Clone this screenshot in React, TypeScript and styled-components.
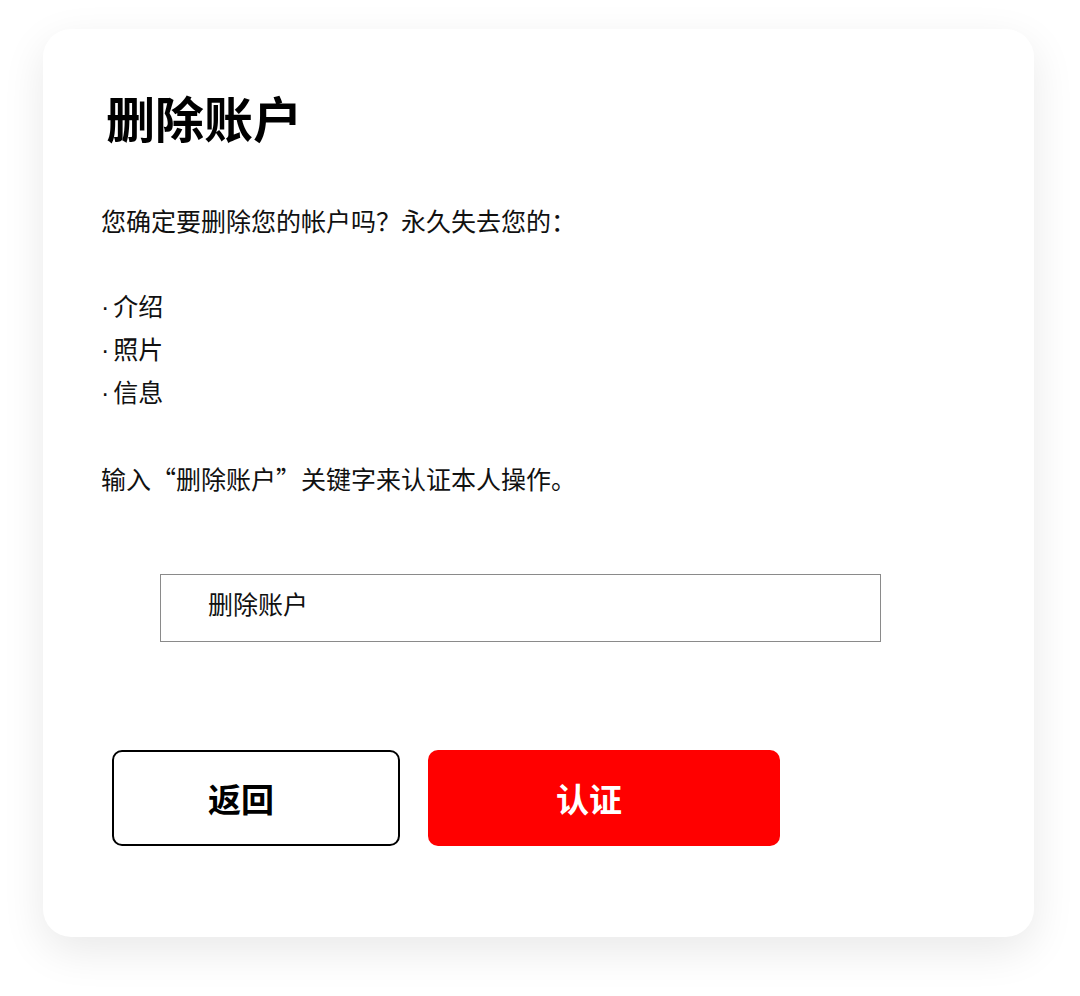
import styled, { createGlobalStyle } from "styled-components";

const GlobalStyle = createGlobalStyle`
  html, body {
    margin: 0;
    padding: 0;
    background: #ffffff;
  }
  body {
    font-family: "Noto Sans CJK SC", "Noto Sans", sans-serif;
    color: #111;
  }
`;

const Page = styled.div`
  width: 1080px;
  height: 996px;
  padding: 29px 0 0 43px;
  box-sizing: border-box;
  overflow: hidden;
`;

const Card = styled.div`
  width: 991px;
  height: 908px;
  box-sizing: border-box;
  background: #fff;
  border-radius: 28px;
  box-shadow: 0 14px 44px rgba(0, 0, 0, 0.09);
  padding: 63px 0 0 58px;
  display: flex;
  flex-direction: column;
  align-items: flex-start;
`;

const Title = styled.h1`
  margin: 0 0 0 5px;
  font-size: 49px;
  line-height: 49px;
  font-weight: 700;
  color: #000;
`;

const Text = styled.p<{ $top: number }>`
  margin: ${(p) => p.$top}px 0 0;
  font-size: 25px;
  line-height: 25px;
  color: #111;
`;

const List = styled.ul`
  margin: 51px 0 0;
  padding: 0;
  list-style: none;
`;

const Item = styled.li`
  font-size: 25px;
  line-height: 43px;
  color: #111;
  &::before {
    content: "·";
    font-family: "Liberation Sans", sans-serif;
    line-height: 0;
    margin-right: 4px;
  }
`;

const Field = styled.input`
  margin: 83px 0 0 59px;
  width: 721px;
  height: 68px;
  box-sizing: border-box;
  border: 1.5px solid #8a8a8a;
  padding: 0 0 10px 47px;
  font-family: inherit;
  font-size: 25px;
  color: #111;
  outline: none;
  background: #fff;
`;

const Actions = styled.div`
  margin: 108px 0 0 11px;
  display: flex;
  gap: 28px;
`;

const Button = styled.button<{ $primary?: boolean }>`
  height: 96px;
  width: ${(p) => (p.$primary ? 352 : 288)}px;
  box-sizing: border-box;
  border-radius: 10px;
  border: ${(p) => (p.$primary ? "none" : "2px solid #000")};
  background: ${(p) => (p.$primary ? "#ff0000" : "#fff")};
  color: ${(p) => (p.$primary ? "#fff" : "#000")};
  font-family: inherit;
  font-size: 33px;
  font-weight: 700;
  padding: 0 30px 0 0;
  cursor: pointer;
`;

export default function App() {
  return (
    <Page>
      <GlobalStyle />
      <Card>
        <Title>删除账户</Title>
        <Text $top={67}>您确定要删除您的帐户吗？永久失去您的：</Text>
        <List>
          <Item>介绍</Item>
          <Item>照片</Item>
          <Item>信息</Item>
        </List>
        <Text $top={53}>输入“删除账户”关键字来认证本人操作。</Text>
        <Field defaultValue="删除账户" />
        <Actions>
          <Button>返回</Button>
          <Button $primary>认证</Button>
        </Actions>
      </Card>
    </Page>
  );
}
